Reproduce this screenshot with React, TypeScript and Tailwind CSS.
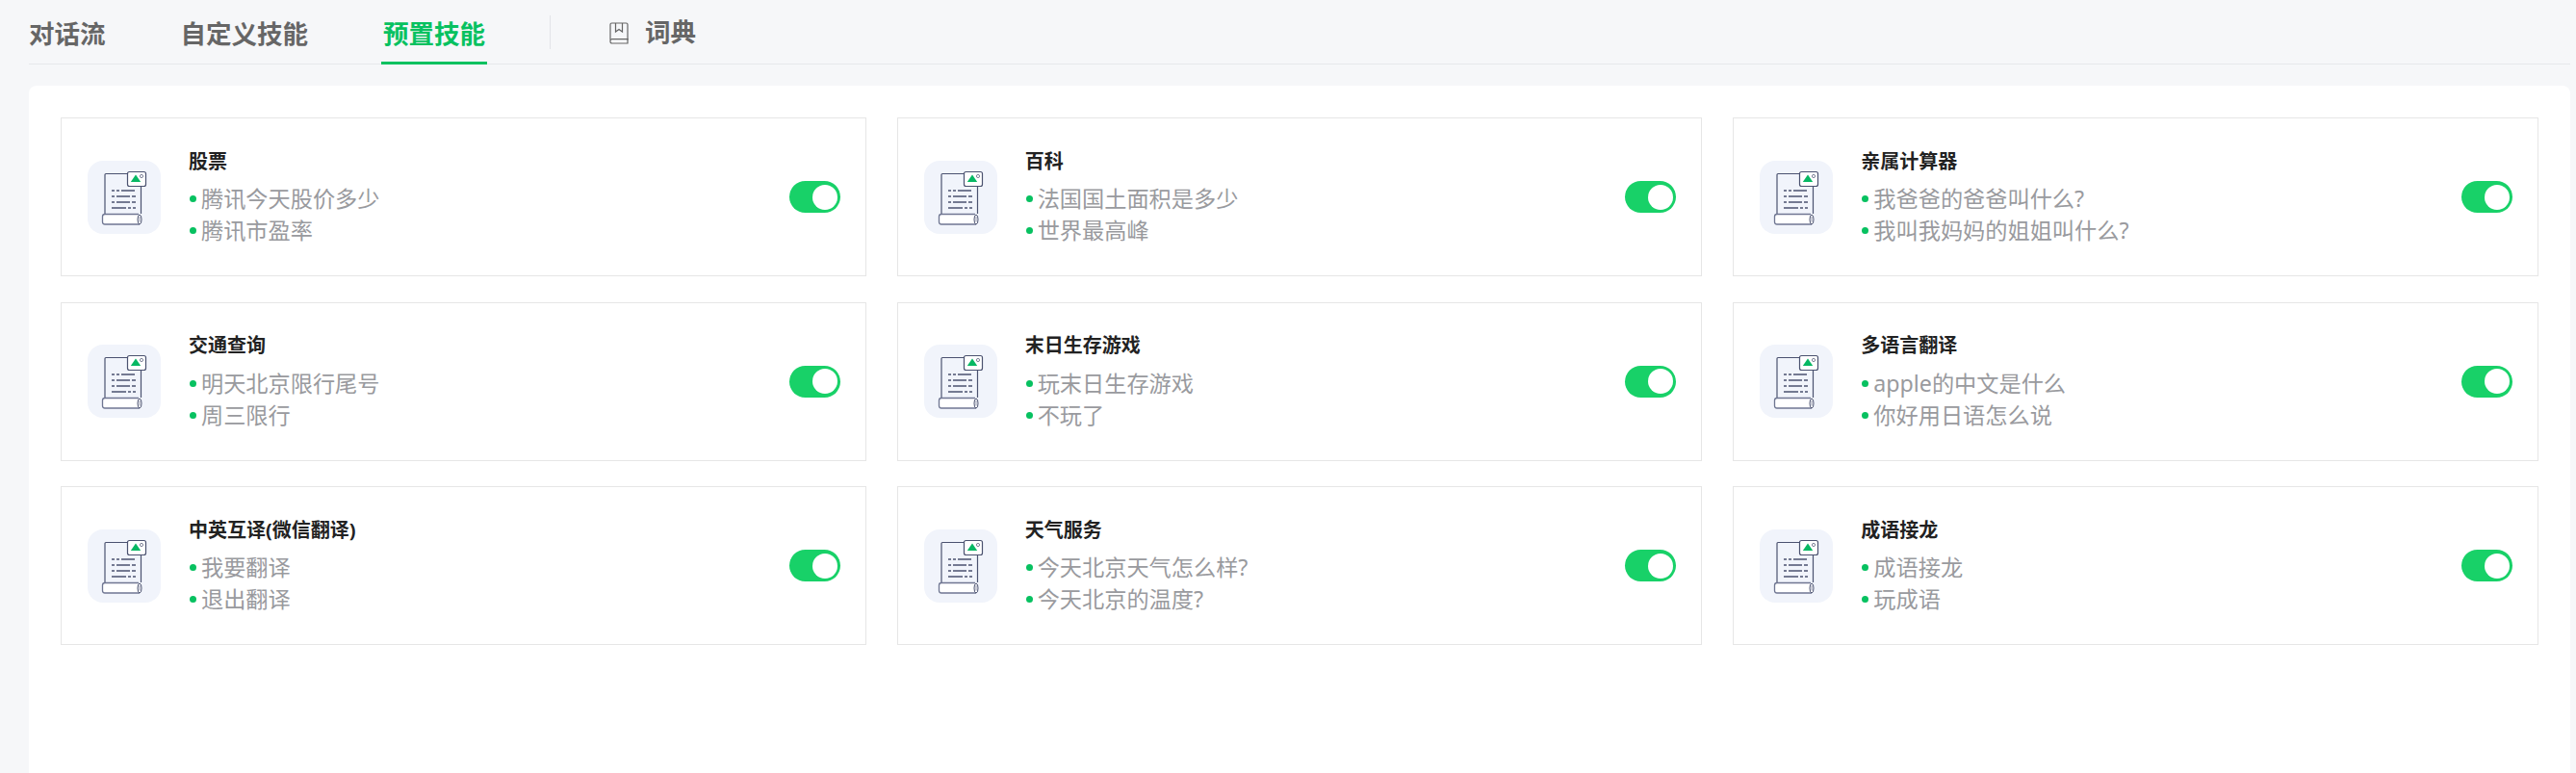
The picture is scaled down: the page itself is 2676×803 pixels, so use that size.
import React from 'react';

interface Skill {
  name: string;
  examples: string[];
}

const skills: Skill[] = [
  { name: '股票', examples: ['腾讯今天股价多少', '腾讯市盈率'] },
  { name: '百科', examples: ['法国国土面积是多少', '世界最高峰'] },
  { name: '亲属计算器', examples: ['我爸爸的爸爸叫什么?', '我叫我妈妈的姐姐叫什么?'] },
  { name: '交通查询', examples: ['明天北京限行尾号', '周三限行'] },
  { name: '末日生存游戏', examples: ['玩末日生存游戏', '不玩了'] },
  { name: '多语言翻译', examples: ['apple的中文是什么', '你好用日语怎么说'] },
  { name: '中英互译(微信翻译)', examples: ['我要翻译', '退出翻译'] },
  { name: '天气服务', examples: ['今天北京天气怎么样?', '今天北京的温度?'] },
  { name: '成语接龙', examples: ['成语接龙', '玩成语'] },
];

const ScrollIcon = () => (
  <svg width="76" height="76" viewBox="0 0 76 76" fill="none">
    {/* page */}
    <path d="M18 55V14.5a1 1 0 0 1 1-1H43M55.5 26V55" stroke="#4b5270" strokeWidth="1.2" />
    {/* text lines */}
    <g stroke="#4b5270" strokeWidth="1.3">
      <path d="M25 31h3M30 31h3M35 31h14" />
      <path d="M25 37h3M30 37h14M46 37h4" />
      <path d="M25 43h3M30 43h14M46 43h4" />
      <path d="M25 49h15M42 49h3M47 49h3" />
    </g>
    {/* picture badge */}
    <rect x="41.5" y="11.5" width="19" height="15" rx="2" fill="#ffffff" stroke="#4b5270" strokeWidth="1.2" />
    <path d="M50 14.5l5.2 7.5H44.8z" fill="#07b863" />
    <circle cx="56" cy="16" r="1.6" stroke="#4b5270" strokeWidth="0.7" />
    {/* scroll roll */}
    <path
      d="M53 55.5H18a2.5 2.5 0 0 0-2.5 2.5v5.5a2.5 2.5 0 0 0 2.5 2.5h36"
      fill="#ffffff"
      stroke="#6f7692"
      strokeWidth="1.3"
    />
    <ellipse cx="54" cy="61" rx="2" ry="5" fill="#ffffff" stroke="#4b5270" strokeWidth="1" />
    <path d="M54 57.5v6" stroke="#7d849f" strokeWidth="0.8" />
  </svg>
);

const BookIcon = () => (
  <svg width="20" height="23" viewBox="0 0 20 23" fill="none" stroke="#666666" strokeWidth="1.2">
    <path d="M1 18.5V2.5A1.5 1.5 0 0 1 2.5 1h15A1.5 1.5 0 0 1 19 2.5v16" />
    <path d="M2.8 17.6h16.2v4.4H2.8A1.8 1.8 0 0 1 1 20.2v-.8a1.8 1.8 0 0 1 1.8-1.8z" />
    <path d="M6.5 1v9l3.5-2.5 3.5 2.5V1" />
  </svg>
);

const Toggle = () => (
  <div className="flex h-[33px] w-[53px] shrink-0 items-center justify-end rounded-full bg-[#18d168] pr-[3px]">
    <div className="h-[26px] w-[26px] rounded-full bg-white" />
  </div>
);

const SkillCard = ({ skill }: { skill: Skill }) => (
  <div className="flex h-[165px] items-center border border-[#e6e6e6] bg-white pl-[27px] pr-[26px]">
    <div className="flex h-[76px] w-[76px] shrink-0 items-center justify-center rounded-[16px] bg-[#f1f4fb]">
      <ScrollIcon />
    </div>
    <div className="ml-[30px] flex-1 pb-[0.5px]">
      <div className="mb-[7.5px] -ml-[1px] text-[20px] leading-[30px] font-bold text-[#222222]">{skill.name}</div>
      {skill.examples.map((ex) => (
        <div key={ex} className="flex items-center text-[23.2px] leading-[33px] text-[#999a9e]">
          <span className="mr-[5px] h-[7px] w-[7px] shrink-0 rounded-full bg-[#07c160]" />
          {ex}
        </div>
      ))}
    </div>
    <Toggle />
  </div>
);

export default function App() {
  return (
    <div
      className="h-[803px] w-[2676px] overflow-hidden bg-[#f6f7f9] pl-[30px] pr-[6px]"
      style={{ fontFamily: '"Noto Sans", "Noto Sans CJK SC", sans-serif' }}
    >
      {/* tabs */}
      <div className="flex h-[67px] items-stretch border-b border-[#e6e8eb] text-[26.5px] font-bold text-[#666666]">
        <div className="-ml-[2px] flex gap-[74px]">
          <div className="px-[2px] pt-[17px] leading-[36px]">对话流</div>
          <div className="px-[2px] pt-[17px] leading-[36px]">自定义技能</div>
          <div className="-mb-[1px] border-b-[3px] border-[#07c160] px-[2px] pt-[17px] leading-[36px] text-[#07c160]">
            预置技能
          </div>
        </div>
        <div className="mt-[16px] ml-[65px] h-[35px] w-px bg-[#e2e4e8]" />
        <div className="ml-[61px] flex h-[69px] items-center pb-[1px]">
          <BookIcon />
          <span className="ml-[17px]">词典</span>
        </div>
      </div>

      {/* skills panel */}
      <div className="mt-[22px] h-[714px] rounded-t-[8px] bg-white px-[33px] pt-[33px]">
        <div className="grid grid-cols-3 gap-x-[32px] gap-y-[26.5px]">
          {skills.map((skill) => (
            <SkillCard key={skill.name} skill={skill} />
          ))}
        </div>
      </div>
    </div>
  );
}
